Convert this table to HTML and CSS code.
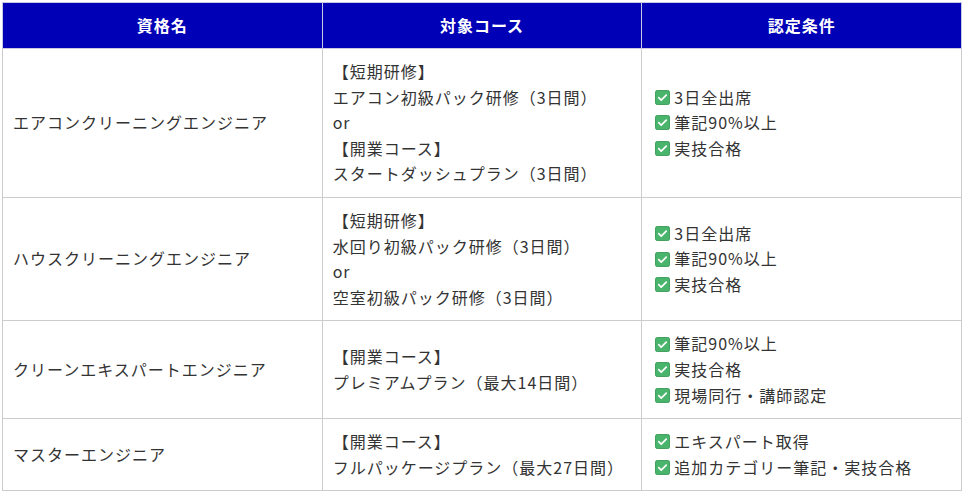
FILE: index.html
```html
<!DOCTYPE html>
<html lang="ja">
<head>
<meta charset="utf-8">
<title>資格一覧</title>
<link rel="stylesheet" href="styles.css">
</head>
<body>
<table class="qual">
  <thead>
    <tr><th>資格名</th><th>対象コース</th><th>認定条件</th></tr>
  </thead>
  <tbody>
    <tr>
      <td>エアコンクリーニングエンジニア</td>
      <td>【短期研修】<br>エアコン初級パック研修（3日間）<br>or<br>【開業コース】<br>スタートダッシュプラン（3日間）</td>
      <td>
        <div class="ck"><svg class="ic" viewBox="0 0 16 16"><rect x="0.5" y="0.5" width="15" height="15" rx="2" fill="#49b56c" stroke="#3a9a58"/><path d="M4 8.2l2.6 2.6L12 5.4" fill="none" stroke="#fff" stroke-width="1.8" stroke-linecap="round" stroke-linejoin="round"/></svg>3日全出席</div>
        <div class="ck"><svg class="ic" viewBox="0 0 16 16"><rect x="0.5" y="0.5" width="15" height="15" rx="2" fill="#49b56c" stroke="#3a9a58"/><path d="M4 8.2l2.6 2.6L12 5.4" fill="none" stroke="#fff" stroke-width="1.8" stroke-linecap="round" stroke-linejoin="round"/></svg>筆記90%以上</div>
        <div class="ck"><svg class="ic" viewBox="0 0 16 16"><rect x="0.5" y="0.5" width="15" height="15" rx="2" fill="#49b56c" stroke="#3a9a58"/><path d="M4 8.2l2.6 2.6L12 5.4" fill="none" stroke="#fff" stroke-width="1.8" stroke-linecap="round" stroke-linejoin="round"/></svg>実技合格</div>
      </td>
    </tr>
    <tr>
      <td>ハウスクリーニングエンジニア</td>
      <td>【短期研修】<br>水回り初級パック研修（3日間）<br>or<br>空室初級パック研修（3日間）</td>
      <td>
        <div class="ck"><svg class="ic" viewBox="0 0 16 16"><rect x="0.5" y="0.5" width="15" height="15" rx="2" fill="#49b56c" stroke="#3a9a58"/><path d="M4 8.2l2.6 2.6L12 5.4" fill="none" stroke="#fff" stroke-width="1.8" stroke-linecap="round" stroke-linejoin="round"/></svg>3日全出席</div>
        <div class="ck"><svg class="ic" viewBox="0 0 16 16"><rect x="0.5" y="0.5" width="15" height="15" rx="2" fill="#49b56c" stroke="#3a9a58"/><path d="M4 8.2l2.6 2.6L12 5.4" fill="none" stroke="#fff" stroke-width="1.8" stroke-linecap="round" stroke-linejoin="round"/></svg>筆記90%以上</div>
        <div class="ck"><svg class="ic" viewBox="0 0 16 16"><rect x="0.5" y="0.5" width="15" height="15" rx="2" fill="#49b56c" stroke="#3a9a58"/><path d="M4 8.2l2.6 2.6L12 5.4" fill="none" stroke="#fff" stroke-width="1.8" stroke-linecap="round" stroke-linejoin="round"/></svg>実技合格</div>
      </td>
    </tr>
    <tr>
      <td>クリーンエキスパートエンジニア</td>
      <td>【開業コース】<br>プレミアムプラン（最大14日間）</td>
      <td>
        <div class="ck"><svg class="ic" viewBox="0 0 16 16"><rect x="0.5" y="0.5" width="15" height="15" rx="2" fill="#49b56c" stroke="#3a9a58"/><path d="M4 8.2l2.6 2.6L12 5.4" fill="none" stroke="#fff" stroke-width="1.8" stroke-linecap="round" stroke-linejoin="round"/></svg>筆記90%以上</div>
        <div class="ck"><svg class="ic" viewBox="0 0 16 16"><rect x="0.5" y="0.5" width="15" height="15" rx="2" fill="#49b56c" stroke="#3a9a58"/><path d="M4 8.2l2.6 2.6L12 5.4" fill="none" stroke="#fff" stroke-width="1.8" stroke-linecap="round" stroke-linejoin="round"/></svg>実技合格</div>
        <div class="ck"><svg class="ic" viewBox="0 0 16 16"><rect x="0.5" y="0.5" width="15" height="15" rx="2" fill="#49b56c" stroke="#3a9a58"/><path d="M4 8.2l2.6 2.6L12 5.4" fill="none" stroke="#fff" stroke-width="1.8" stroke-linecap="round" stroke-linejoin="round"/></svg>現場同行・講師認定</div>
      </td>
    </tr>
    <tr>
      <td>マスターエンジニア</td>
      <td>【開業コース】<br>フルパッケージプラン（最大27日間）</td>
      <td>
        <div class="ck"><svg class="ic" viewBox="0 0 16 16"><rect x="0.5" y="0.5" width="15" height="15" rx="2" fill="#49b56c" stroke="#3a9a58"/><path d="M4 8.2l2.6 2.6L12 5.4" fill="none" stroke="#fff" stroke-width="1.8" stroke-linecap="round" stroke-linejoin="round"/></svg>エキスパート取得</div>
        <div class="ck"><svg class="ic" viewBox="0 0 16 16"><rect x="0.5" y="0.5" width="15" height="15" rx="2" fill="#49b56c" stroke="#3a9a58"/><path d="M4 8.2l2.6 2.6L12 5.4" fill="none" stroke="#fff" stroke-width="1.8" stroke-linecap="round" stroke-linejoin="round"/></svg>追加カテゴリー筆記・実技合格</div>
      </td>
    </tr>
  </tbody>
</table>
</body>
</html>
```

FILE: styles.css
```css
html, body {
  margin: 0;
  padding: 0;
  background: #fff;
}
body {
  padding: 2px;
  font-family: "Noto Sans CJK JP", "Noto Sans", sans-serif;
  font-size: 16px;
  color: #333;
}
.qual {
  width: 960px;
  border-collapse: collapse;
  table-layout: fixed;
}
.qual th,
.qual td {
  border: 1px solid #cccccc;
  line-height: 1.6;
  vertical-align: middle;
  text-align: left;
  padding: 10px;
  letter-spacing: 1px;
}
.qual th {
  background: #0000b7;
  color: #fff;
  font-weight: bold;
  text-align: center;
  border-color: #c8c8e0;
  line-height: 25px;
}
.ck {
  display: flex;
  align-items: center;
}
.ic {
  width: 15px;
  height: 15px;
  margin: 0 4px 0 3px;
  flex: none;
}
```
